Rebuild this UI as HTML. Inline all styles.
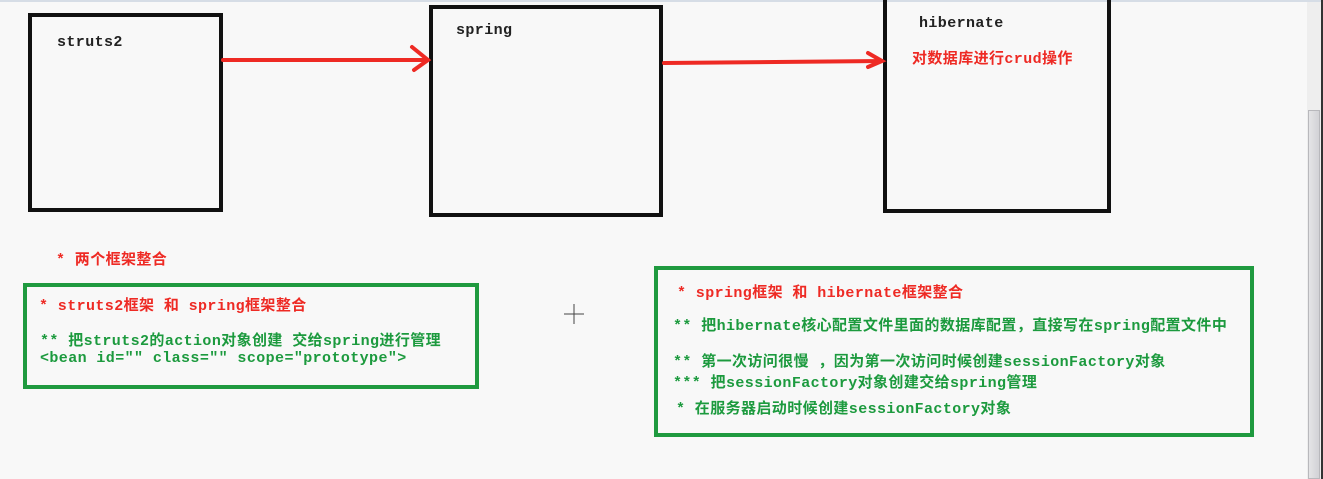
<!DOCTYPE html>
<html><head><meta charset="utf-8"><style>
body{margin:0;width:1323px;height:479px;background:#f8f8f8;position:relative;overflow:hidden;font-family:"Liberation Mono","Noto Sans CJK SC",monospace;font-weight:bold}
.a{position:absolute}
.box{position:absolute;border:4px solid #111;box-sizing:border-box}
.g{position:absolute;border:4px solid #1f9a3f;box-sizing:border-box}
.t{position:absolute;white-space:nowrap;font-size:15px;letter-spacing:0.4px}
.r{color:#ee2a24}.gr{color:#1c9a3e}.k{color:#222}
</style></head><body>
<div class="a" style="left:0;top:0;width:1323px;height:2px;background:#d6dde6"></div>
<div class="box" style="left:28px;top:13px;width:195px;height:199px"></div>
<div class="box" style="left:429px;top:5px;width:234px;height:212px"></div>
<div class="box" style="left:883px;top:-6px;width:228px;height:219px"></div>
<svg class="a" style="left:0;top:0" width="1323" height="479">
<g stroke="#ee2a24" stroke-width="4" fill="none" stroke-linecap="round">
<path d="M223 60 L428 60 M412 47 L428 60 L414 70"/>
<path d="M664 63 L882 61 M868 53 L882 61 L868 67"/>
</g>
<g stroke="#444" stroke-width="1"><path d="M574 304v20M564 314h20"/></g>
</svg>
<div class="t k" style="left:57px;top:34px">struts2</div>
<div class="t k" style="left:456px;top:22px">spring</div>
<div class="t k" style="left:919px;top:15px">hibernate</div>
<div class="t r" style="left:912px;top:47px">对数据库进行crud操作</div>
<div class="t r" style="left:56px;top:248px">* 两个框架整合</div>
<div class="g" style="left:23px;top:283px;width:456px;height:106px"></div>
<div class="t r" style="left:39px;top:294px">* struts2框架 和 spring框架整合</div>
<div class="t gr" style="left:40px;top:329px">** 把struts2的action对象创建 交给spring进行管理</div>
<div class="t gr" style="left:40px;top:350px">&lt;bean id="" class="" scope="prototype"&gt;</div>
<div class="g" style="left:654px;top:266px;width:600px;height:171px"></div>
<div class="t r" style="left:677px;top:281px">* spring框架 和 hibernate框架整合</div>
<div class="t gr" style="left:673px;top:314px">** 把hibernate核心配置文件里面的数据库配置，直接写在spring配置文件中</div>
<div class="t gr" style="left:673px;top:350px">** 第一次访问很慢 ，因为第一次访问时候创建sessionFactory对象</div>
<div class="t gr" style="left:673px;top:371px">*** 把sessionFactory对象创建交给spring管理</div>
<div class="t gr" style="left:676px;top:397px">* 在服务器启动时候创建sessionFactory对象</div>
<div class="a" style="left:1307px;top:2px;width:14px;height:477px;background:#eeeeee"></div>
<div class="a" style="left:1308px;top:110px;width:12px;height:369px;background:linear-gradient(90deg,#e4e4e6,#d2d2d6);border:1px solid #b8b8bc;box-sizing:border-box"></div>
<div class="a" style="left:1321px;top:0;width:2px;height:479px;background:#333"></div>
</body></html>
